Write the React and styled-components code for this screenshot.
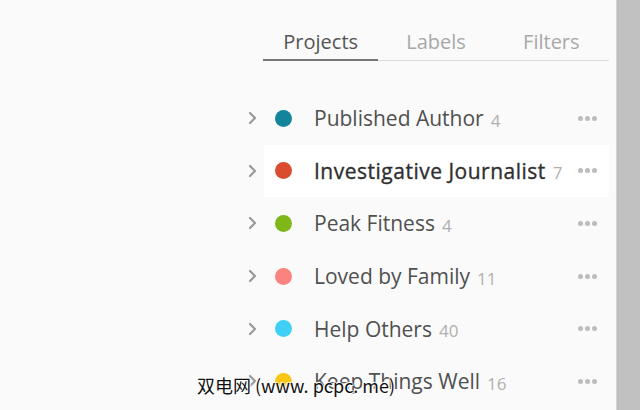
import React from 'react';
import styled, { createGlobalStyle } from 'styled-components';

const GlobalStyle = createGlobalStyle`
  html, body {
    margin: 0;
    padding: 0;
    background: #fafafa;
  }
  body {
    font-family: "Open Sans", "Noto Sans", sans-serif;
  }
`;

const Page = styled.div`
  position: relative;
  display: flex;
  width: 640px;
  height: 410px;
  overflow: hidden;
  background: #fafafa;
`;

const Spacer = styled.div`
  flex: 1;
`;

const Panel = styled.div`
  width: 370px;
  padding-top: 26px;
  margin-right: 7px;
`;

const Tabs = styled.div`
  display: grid;
  grid-template-columns: repeat(3, 1fr);
  margin-left: 24px;
  border-bottom: 1px solid #dcdcdc;
`;

const Tab = styled.div`
  text-align: center;
  font-size: 20px;
  line-height: 32px;
  padding-bottom: 1px;
  color: ${p => (p.active ? '#555' : '#a8a8a8')};
  border-bottom: 2px solid ${p => (p.active ? '#777' : 'transparent')};
  margin-bottom: -1px;
`;

const List = styled.ul`
  list-style: none;
  margin: 31px 0 0;
  padding: 0;
`;

const Row = styled.li`
  display: flex;
  align-items: center;
  height: 52.6px;
`;

const Chevron = styled.div`
  width: 24px;
  display: flex;
  justify-content: center;
  padding-left: 1px;
  color: #999;
`;

const Item = styled.div`
  flex: 1;
  display: flex;
  align-items: center;
  height: 100%;
  padding: 0 12px 0 11px;
  background: ${p => (p.hover ? '#fff' : 'transparent')};
`;

const Dot = styled.span`
  width: 17px;
  height: 17px;
  border-radius: 50%;
  background: ${p => p.color};
  margin-right: 22px;
  flex-shrink: 0;
`;

const Name = styled.span`
  font-size: 21px;
  color: ${p => (p.hover ? '#2f2f2f' : '#505050')};
  letter-spacing: ${p => (p.hover ? '0.5px' : '0')};
  -webkit-text-stroke: ${p => (p.hover ? '0.35px #2f2f2f' : '0')};
`;

const Count = styled.span`
  font-size: 17px;
  color: #b0b0b0;
  margin-left: 7px;
  margin-top: 4px;
  flex: 1;
`;

const More = styled.div`
  display: flex;
  gap: 2px;
  span {
    width: 5px;
    height: 5px;
    border-radius: 50%;
    background: #bcbcbc;
  }
`;

const Scrollbar = styled.div`
  width: 23px;
  background: #c1c1c1;
  border-left: 1px solid #d4d4d4;
`;

const Watermark = styled.div`
  position: absolute;
  left: 197px;
  top: 372px;
  font-family: "Noto Sans CJK SC", "Liberation Sans", sans-serif;
  font-size: 18px;
  color: #111;
  text-shadow: 0 0 2px #fff, 0 0 2px #fff, 1px 1px 1px #fff, -1px -1px 1px #fff;
  white-space: nowrap;
`;

const projects = [
  { name: 'Published Author', count: 4, color: '#13849b' },
  { name: 'Investigative Journalist', count: 7, color: '#db4c2f', hover: true },
  { name: 'Peak Fitness', count: 4, color: '#7fb719' },
  { name: 'Loved by Family', count: 11, color: '#fa837f' },
  { name: 'Help Others', count: 40, color: '#41d0f5' },
  { name: 'Keep Things Well', count: 16, color: '#fac613' },
];

const ChevronIcon = () => (
  <svg width="9" height="14" viewBox="0 0 9 14">
    <path d="M2 2l5 5-5 5" fill="none" stroke="currentColor" strokeWidth="2.2" strokeLinecap="round" strokeLinejoin="round" />
  </svg>
);

const App = () => (
  <Page>
    <GlobalStyle />
    <Spacer />
    <Panel>
      <Tabs>
        <Tab active>Projects</Tab>
        <Tab>Labels</Tab>
        <Tab>Filters</Tab>
      </Tabs>
      <List>
        {projects.map(p => (
          <Row key={p.name}>
            <Chevron><ChevronIcon /></Chevron>
            <Item hover={p.hover}>
              <Dot color={p.color} />
              <Name hover={p.hover}>{p.name}</Name>
              <Count>{p.count}</Count>
              <More><span /><span /><span /></More>
            </Item>
          </Row>
        ))}
      </List>
    </Panel>
    <Scrollbar />
    <Watermark>双电网 (www. pcpc. me)</Watermark>
  </Page>
);

export default App;
